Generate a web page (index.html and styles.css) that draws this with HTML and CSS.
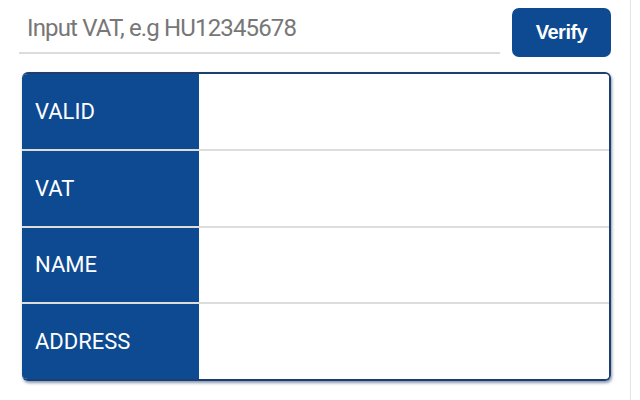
FILE: index.html
```html
<!DOCTYPE html>
<html lang="en">

<head>
    <meta charset="UTF-8">
    <meta name="viewport" content="width=device-width, initial-scale=1.0">
    <title>VAT check</title>
    <link rel="stylesheet" href="styles.css">
</head>

<body>
    <div class="popup">
        <div class="search">
            <input class="vatInput" type="text" placeholder="Input VAT, e.g HU12345678">
            <button class="verifyBtn">Verify</button>
        </div>

        <div class="result">
            <div class="row">
                <div class="label">VALID</div>
                <div class="value"></div>
            </div>
            <div class="row">
                <div class="label">VAT</div>
                <div class="value"></div>
            </div>
            <div class="row">
                <div class="label">NAME</div>
                <div class="value"></div>
            </div>
            <div class="row">
                <div class="label">ADDRESS</div>
                <div class="value"></div>
            </div>
        </div>
    </div>
</body>

</html>
```

FILE: styles.css
```css
body {
    margin: 0;
    background-color: white;
    font-family: Roboto, "Liberation Sans", sans-serif;
}

.popup {
    width: 631px;
    height: 400px;
    border-right: 1px solid #e4e4e4;
    box-sizing: border-box;
    padding: 8px 0 0 0;
}

.search {
    display: flex;
    align-items: flex-start;
    margin-left: 19px;
}

.vatInput {
    width: 481px;
    height: 46px;
    box-sizing: border-box;
    border: none;
    border-bottom: 2px solid #dcdcdc;
    outline: none;
    padding: 0 0 4px 8px;
    font-family: Roboto, "Liberation Sans", sans-serif;
    font-size: 24px;
    letter-spacing: -0.85px;
    color: #444;
}

.vatInput::placeholder {
    color: #777;
}

.verifyBtn {
    margin-left: 12px;
    width: 99px;
    height: 49px;
    border: none;
    border-radius: 7px;
    background-color: #0d4a91;
    color: white;
    font-family: "Liberation Sans", sans-serif;
    font-weight: bold;
    font-size: 20px;
    letter-spacing: -0.5px;
    cursor: pointer;
}

.result {
    margin: 15px 0 0 22px;
    width: 589px;
    height: 309px;
    box-sizing: border-box;
    border: 2px solid #1c3f70;
    border-left: none;
    border-radius: 6px;
    overflow: hidden;
    box-shadow: 1px 2px 3px rgba(20, 50, 100, 0.5);
    display: flex;
    flex-direction: column;
}

.row {
    flex: 1;
    display: flex;
    border-bottom: 2px solid #dddddd;
}

.row:last-child {
    border-bottom: none;
}

.label {
    width: 177px;
    background-color: #0d4a91;
    color: white;
    font-size: 22px;
    display: flex;
    align-items: center;
    padding-left: 13px;
    box-sizing: border-box;
}

.value {
    flex: 1;
    background-color: white;
}
```
